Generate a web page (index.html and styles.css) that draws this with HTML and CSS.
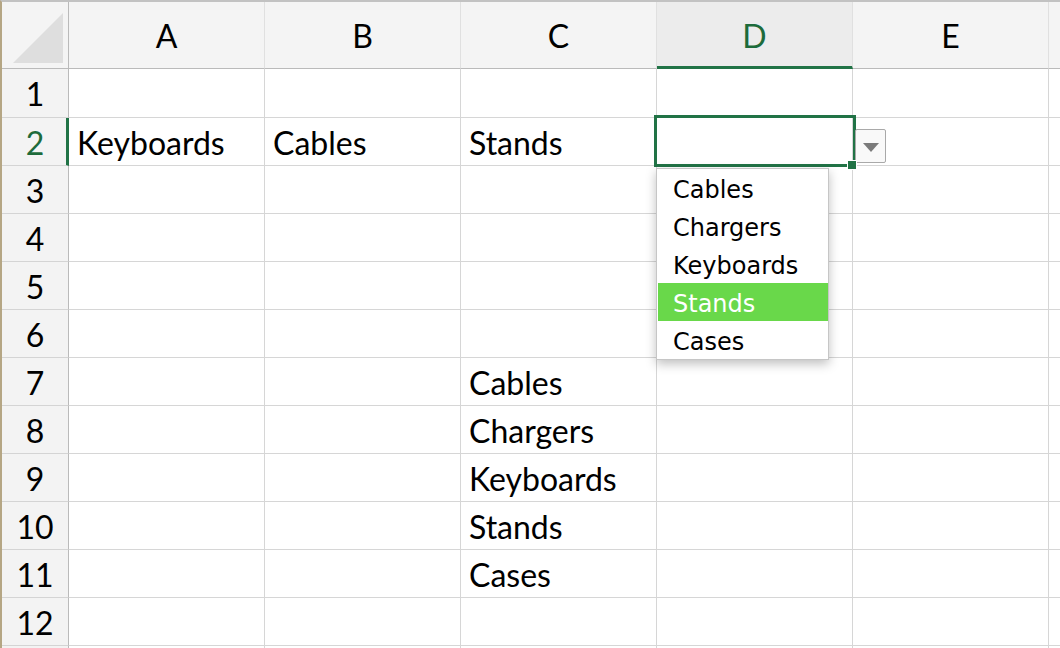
FILE: index.html
```html
<!DOCTYPE html>
<html lang="en">
<head>
  <meta charset="UTF-8">
  <title>Data validation list</title>
  <link rel="stylesheet" href="styles.css">
</head>
<body>
  <div class="sheet">
    <div class="row head">
      <div class="rh corner"><div class="tri"></div></div>
      <div class="c">A</div>
      <div class="c">B</div>
      <div class="c">C</div>
      <div class="c on">D</div>
      <div class="c">E</div>
      <div class="c"></div>
    </div>
    <div class="row first">
      <div class="rh">1</div>
      <div class="c"></div><div class="c"></div><div class="c"></div><div class="c"></div><div class="c"></div><div class="c"></div>
    </div>
    <div class="row">
      <div class="rh on">2</div>
      <div class="c">Keyboards</div>
      <div class="c">Cables</div>
      <div class="c">Stands</div>
      <div class="c active">
        <div class="sel"></div>
        <div class="handle"></div>
        <div class="ddbtn"><span class="arrow"></span></div>
        <div class="ddlist">
          <div class="opt">Cables</div>
          <div class="opt">Chargers</div>
          <div class="opt">Keyboards</div>
          <div class="opt hl">Stands</div>
          <div class="opt">Cases</div>
        </div>
      </div>
      <div class="c"></div><div class="c"></div>
    </div>
    <div class="row">
      <div class="rh">3</div>
      <div class="c"></div><div class="c"></div><div class="c"></div><div class="c"></div><div class="c"></div><div class="c"></div>
    </div>
    <div class="row">
      <div class="rh">4</div>
      <div class="c"></div><div class="c"></div><div class="c"></div><div class="c"></div><div class="c"></div><div class="c"></div>
    </div>
    <div class="row">
      <div class="rh">5</div>
      <div class="c"></div><div class="c"></div><div class="c"></div><div class="c"></div><div class="c"></div><div class="c"></div>
    </div>
    <div class="row">
      <div class="rh">6</div>
      <div class="c"></div><div class="c"></div><div class="c"></div><div class="c"></div><div class="c"></div><div class="c"></div>
    </div>
    <div class="row">
      <div class="rh">7</div>
      <div class="c"></div><div class="c"></div><div class="c">Cables</div><div class="c"></div><div class="c"></div><div class="c"></div>
    </div>
    <div class="row">
      <div class="rh">8</div>
      <div class="c"></div><div class="c"></div><div class="c">Chargers</div><div class="c"></div><div class="c"></div><div class="c"></div>
    </div>
    <div class="row">
      <div class="rh">9</div>
      <div class="c"></div><div class="c"></div><div class="c">Keyboards</div><div class="c"></div><div class="c"></div><div class="c"></div>
    </div>
    <div class="row">
      <div class="rh">10</div>
      <div class="c"></div><div class="c"></div><div class="c">Stands</div><div class="c"></div><div class="c"></div><div class="c"></div>
    </div>
    <div class="row">
      <div class="rh">11</div>
      <div class="c"></div><div class="c"></div><div class="c">Cases</div><div class="c"></div><div class="c"></div><div class="c"></div>
    </div>
    <div class="row">
      <div class="rh">12</div>
      <div class="c"></div><div class="c"></div><div class="c"></div><div class="c"></div><div class="c"></div><div class="c"></div>
    </div>
    <div class="row">
      <div class="rh"></div>
      <div class="c"></div><div class="c"></div><div class="c"></div><div class="c"></div><div class="c"></div><div class="c"></div>
    </div>
  </div>
</body>
</html>
```

FILE: styles.css
```css
*{margin: 0;box-sizing: border-box;}
body{
  background: #fff;
  overflow: hidden;
}
.sheet{
  width: 1060px;
  height: 648px;
  overflow: hidden;
  border-top: 2px solid #c2c2c2;
  border-left: 2px solid #b5a684;
  font-family: Lato, "Liberation Sans", sans-serif;
  font-size: 32px;
  color: #000;
}
.row{
  display: flex;
  height: 48px;
}
.row.first{
  height: 49px;
}
.rh{
  flex: none;
  width: 67px;
  border-right: 1px solid #bababa;
  border-bottom: 1px solid #d4d4d4;
  background: #f3f3f3;
  text-align: center;
  line-height: 49px;
}
.c{
  flex: none;
  width: 196px;
  border-right: 1px solid #d6d6d6;
  border-bottom: 1px solid #d6d6d6;
  padding-left: 8px;
  line-height: 49px;
  white-space: nowrap;
}
.head{
  height: 67px;
}
.head .rh, .head .c{
  border-bottom: 1px solid #bababa;
  line-height: 67px;
  background: #f4f4f4;
}
.head .c{
  border-right-color: #e0e0e0;
  text-align: center;
  padding-left: 0;
}
.head .c.on{
  background: #ececec;
  color: #1d6b3b;
  border-bottom: 3px solid #217346;
}
.corner{
  position: relative;
  background: #f7f7f7;
}
.tri{
  position: absolute;
  left: 11px;
  top: 11px;
  width: 50px;
  height: 50px;
  background: #dedede;
  clip-path: polygon(100% 0, 100% 100%, 0 100%);
}
.rh.on{
  color: #1d6b3b;
  border-right: 3px solid #217346;
  padding-left: 2px;
}
.active{
  position: relative;
}
.sel{
  position: absolute;
  left: -3px;
  top: -3px;
  width: 202px;
  height: 52px;
  border: 3px solid #217346;
  z-index: 2;
}
.handle{
  position: absolute;
  left: 190px;
  top: 42px;
  width: 10px;
  height: 10px;
  background: #217346;
  border: 1px solid #fff;
  z-index: 3;
}
.ddbtn{
  position: absolute;
  left: 198px;
  top: 11px;
  width: 31px;
  height: 34px;
  border: 1px solid #a9a9a9;
  border-radius: 2px;
  background: #f9f9f9;
  z-index: 2;
}
.arrow{
  position: absolute;
  left: 7px;
  top: 13px;
  width: 0;
  height: 0;
  border-left: 8px solid transparent;
  border-right: 8px solid transparent;
  border-top: 9px solid #7b7b7b;
}
.ddlist{
  position: absolute;
  left: -1px;
  top: 50px;
  width: 173px;
  height: 192px;
  background: #fff;
  border: 1px solid #c6c6c6;
  box-shadow: 0 4px 10px rgba(0, 0, 0, 0.25);
  padding-left: 1px;
  z-index: 4;
  font-family: "DejaVu Sans", sans-serif;
  font-size: 24px;
}
.opt{
  height: 38px;
  line-height: 34px;
  padding-top: 4px;
  padding-left: 15px;
  color: #000;
}
.opt.hl{
  background: #69d84a;
  color: #fff;
}
```
